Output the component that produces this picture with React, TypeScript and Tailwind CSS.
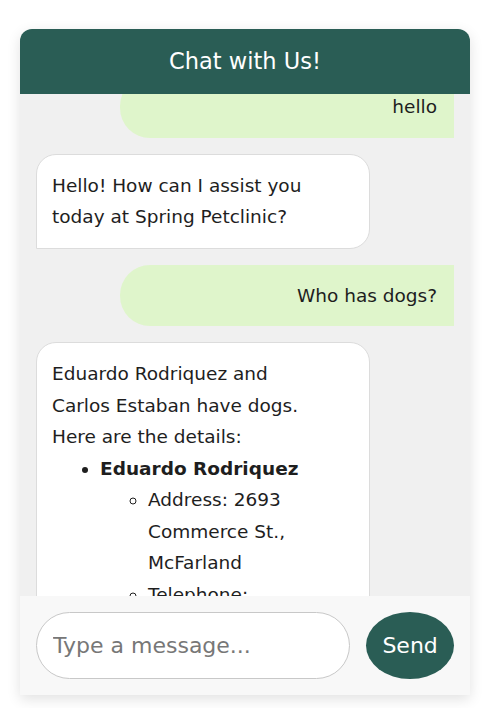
import { useEffect, useRef } from "react";

const FONT = { fontFamily: '"DejaVu Sans", "Noto Sans", sans-serif' };

function UserBubble({ text }: { text: string }) {
  return (
    <div className="flex justify-end">
      <div className="w-[80%] rounded-l-[30px] bg-[#dff5cb] px-[17px] py-[15px] text-right">{text}</div>
    </div>
  );
}

function BotBubble({ children }: { children: React.ReactNode }) {
  return (
    <div className="flex justify-start">
      <div className="w-[80%] rounded-[20px] rounded-bl-none border border-[#dcdcdc] bg-white py-[15px] pl-[15px] pr-[38px]">
        {children}
      </div>
    </div>
  );
}

export default function App() {
  const listRef = useRef<HTMLDivElement>(null);

  useEffect(() => {
    if (listRef.current) listRef.current.scrollTop = 34;
  }, []);

  return (
    <div className="min-h-screen bg-white pt-[29px]" style={FONT}>
      <div className="ml-[20px] flex w-[450px] flex-col shadow-[0_4px_14px_rgba(0,0,0,0.12)] rounded-t-[12px]">
        <div className="flex h-[65px] items-center justify-center rounded-t-[12px] bg-[#2a5d55] text-[22.5px] text-white">
          Chat with Us!
        </div>

        <div ref={listRef} className="h-[502px] overflow-hidden bg-[#f0f0f0] p-4 text-[18.5px] leading-[31.5px] text-[#1e1e1e]">
          <div className="flex flex-col gap-4">
            <UserBubble text="hello" />
            <BotBubble>Hello! How can I assist you today at Spring Petclinic?</BotBubble>
            <UserBubble text="Who has dogs?" />
            <BotBubble>
              <p>Eduardo Rodriquez and Carlos Estaban have dogs. Here are the details:</p>
              <ul className="list-disc pl-[48px]">
                <li>
                  <strong className="font-bold">Eduardo Rodriquez</strong>
                  <ul className="list-[circle] pl-[48px]">
                    <li>Address: 2693 Commerce St., McFarland</li>
                    <li>Telephone: 6085558763</li>
                    <li>Pets: Rosy (dog), Jewel (dog)</li>
                  </ul>
                </li>
                <li>
                  <strong className="font-bold">Carlos Estaban</strong>
                  <ul className="list-[circle] pl-[48px]">
                    <li>Address: 2335 Independence La., Waunakee</li>
                    <li>Telephone: 6085555487</li>
                    <li>Pets: Lucky (dog)</li>
                  </ul>
                </li>
              </ul>
            </BotBubble>
          </div>
        </div>

        <div className="flex h-[99px] items-center gap-4 bg-[#f8f8f8] px-4">
          <input
            autoFocus
            type="text"
            placeholder="Type a message..."
            className="h-[67px] w-[315px] rounded-full border border-[#c8c8c8] bg-white px-4 text-[22px] text-[#222] placeholder:text-[#777] focus:outline-none"
          />
          <button className="h-[67px] w-[88px] rounded-[50%] bg-[#2a5d55] text-[22px] text-white">Send</button>
        </div>
      </div>
    </div>
  );
}
